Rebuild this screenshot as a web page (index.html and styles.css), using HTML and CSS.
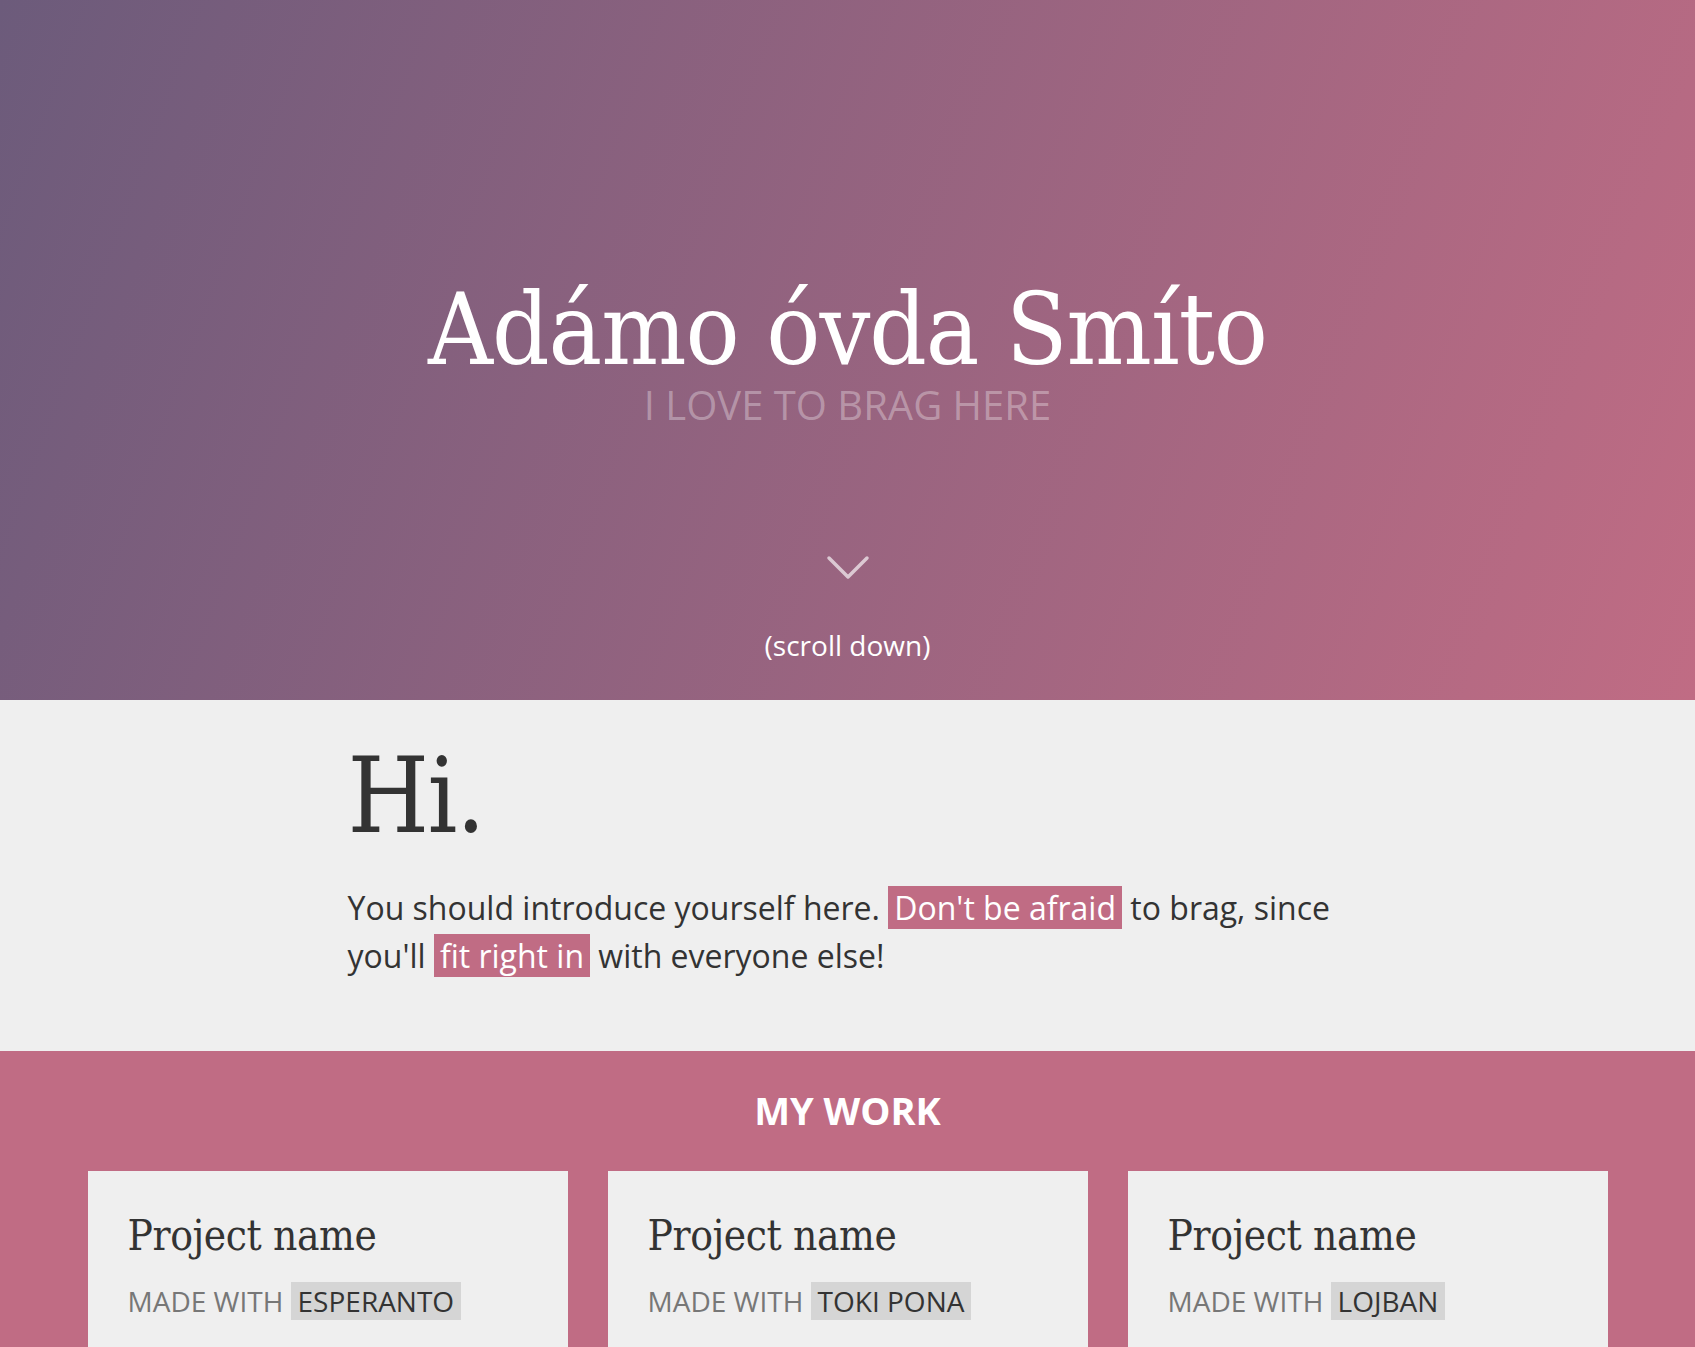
FILE: index.html
```html
<!DOCTYPE html>
<html lang="en">
<head>
<meta charset="utf-8">
<title>Adámo óvda Smíto</title>
<link rel="stylesheet" href="styles.css">
</head>
<body>
<header class="hero">
  <h1 class="hero-title">Adámo óvda Smíto</h1>
  <p class="hero-sub">I LOVE TO BRAG HERE</p>
  <svg class="chevron" width="44" height="26" viewBox="0 0 44 26" aria-hidden="true">
    <polyline points="3,3 22,22 41,3" fill="none" stroke="currentColor" stroke-width="3.5" stroke-linecap="round" stroke-linejoin="round"/>
  </svg>
  <p class="scroll-text">(scroll down)</p>
</header>

<section class="intro">
  <div class="container">
    <h2 class="intro-title">Hi.</h2>
    <p class="intro-text">You should introduce yourself here. <span class="mark">Don't be afraid</span> to brag, since you'll <span class="mark">fit right in</span> with everyone else!</p>
  </div>
</section>

<section class="work">
  <h2 class="work-title">MY WORK</h2>
  <div class="cards">
    <article class="card">
      <h3 class="card-title">Project name</h3>
      <p class="card-meta">MADE WITH <span class="tag">ESPERANTO</span></p>
    </article>
    <article class="card">
      <h3 class="card-title">Project name</h3>
      <p class="card-meta">MADE WITH <span class="tag">TOKI PONA</span></p>
    </article>
    <article class="card">
      <h3 class="card-title">Project name</h3>
      <p class="card-meta">MADE WITH <span class="tag">LOJBAN</span></p>
    </article>
  </div>
</section>
</body>
</html>
```

FILE: styles.css
```css
* {
  box-sizing: border-box;
}

html, body {
  margin: 0;
  padding: 0;
}

body {
  font-family: "Open Sans", "Noto Sans", sans-serif;
  color: #333;
  background: #c06c84;
}

.hero {
  height: 700px;
  padding-top: 280px;
  display: flex;
  flex-direction: column;
  align-items: center;
  background: linear-gradient(110deg, #6c5b7b 0%, #c06c84 100%);
  color: #fff;
}

.hero-title {
  margin: 0;
  font-family: "DejaVu Serif Condensed", "DejaVu Serif", serif;
  font-stretch: condensed;
  font-weight: 400;
  font-size: 100px;
  line-height: 100px;
  letter-spacing: -1px;
  color: #fff;
}

.hero-sub {
  margin: 6px 0 0;
  font-size: 40px;
  line-height: 38px;
  font-weight: 400;
  color: rgba(255, 255, 255, 0.33);
}

.chevron {
  margin-top: 131px;
  color: rgba(255, 255, 255, 0.65);
  display: block;
}

.scroll-text {
  margin: 50px 0 0;
  font-size: 28px;
  line-height: 28px;
  color: #fff;
}

.intro {
  background: #efefef;
  padding: 44px 0 71px;
}

.container {
  width: 1000px;
  margin: 0 auto;
}

.intro-title {
  margin: 0;
  font-family: "DejaVu Serif Condensed", "DejaVu Serif", serif;
  font-stretch: condensed;
  font-weight: 400;
  font-size: 104px;
  line-height: 104px;
  letter-spacing: -1.5px;
  color: #333;
}

.intro-text {
  margin: 36px 0 0;
  font-size: 32px;
  line-height: 48px;
  color: #333;
}

.mark {
  background: #c06c84;
  color: #fff;
  padding: 0 6px;
}

.work {
  background: #c06c84;
  padding: 41px 0 60px;
}

.work-title {
  margin: 0;
  text-align: center;
  font-size: 38px;
  line-height: 37px;
  font-weight: 700;
  color: #fff;
}

.cards {
  margin: 42px auto 0;
  display: grid;
  grid-template-columns: repeat(3, 480px);
  gap: 40px;
  justify-content: center;
}

.card {
  background: #efefef;
  padding: 44px 40px 120px;
}

.card-title {
  margin: 0;
  font-family: "DejaVu Serif Condensed", "DejaVu Serif", serif;
  font-stretch: condensed;
  font-weight: 400;
  font-size: 42px;
  line-height: 42px;
  letter-spacing: -0.4px;
  color: #333;
}

.card-meta {
  margin: 25px 0 0;
  font-size: 28px;
  color: #777;
}

.tag {
  background: #d5d5d5;
  color: #333;
  padding: 0 7px;
}
```
